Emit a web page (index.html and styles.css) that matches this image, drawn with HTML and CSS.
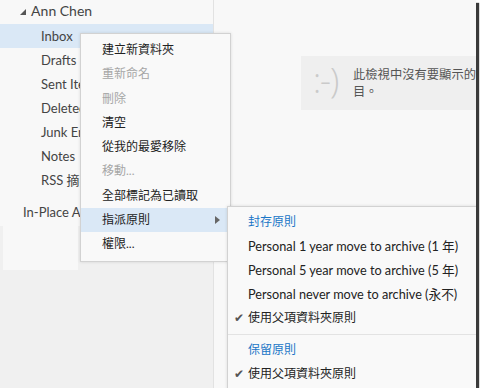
FILE: index.html
```
<!DOCTYPE html>
<html lang="zh-Hant">
<head>
    <meta charset="UTF-8">
    <title>Folder menu</title>
    <link rel="stylesheet" href="styles.css">
</head>
<body>
    <div class="screen">
        <div class="folders">
            <div class="tree">
                <div class="row account">
                    <svg class="twisty" width="6" height="6" viewBox="0 0 6 6"><polygon points="6,0 6,6 0,6" fill="#555"/></svg>
                    Ann Chen
                </div>
                <div class="row folder selected">Inbox</div>
                <div class="row folder">Drafts</div>
                <div class="row folder">Sent Items</div>
                <div class="row folder">Deleted Items</div>
                <div class="row folder">Junk Email</div>
                <div class="row folder">Notes</div>
                <div class="row folder">RSS 摘要</div>
                <div class="row archive">In-Place Archive</div>
            </div>
            <div class="rest">
                <div class="tip"></div>
            </div>
        </div>
        <div class="main">
            <div class="empty">
                <span class="smiley">:-)</span>
                <p class="msg">此檢視中沒有要顯示的項目。</p>
            </div>
        </div>

        <ul class="menu">
            <li>建立新資料夾</li>
            <li class="off">重新命名</li>
            <li class="off">刪除</li>
            <li>清空</li>
            <li>從我的最愛移除</li>
            <li class="off">移動...</li>
            <li>全部標記為已讀取</li>
            <li class="open">指派原則<span class="arrow"></span></li>
            <li>權限...</li>
        </ul>

        <ul class="submenu">
            <li class="head">封存原則</li>
            <li class="en">Personal 1 year move to archive (1 年)</li>
            <li class="en">Personal 5 year move to archive (5 年)</li>
            <li class="en">Personal never move to archive (永不)</li>
            <li><span class="check">✔</span>使用父項資料夾原則</li>
            <li class="sep"></li>
            <li class="head">保留原則</li>
            <li><span class="check">✔</span>使用父項資料夾原則</li>
        </ul>
    </div>
</body>
</html>
```

FILE: styles.css
```
body {
    margin: 0;
    background: #fff;
    font-family: Lato, "Noto Sans CJK TC", sans-serif;
    font-size: 13px;
    color: #444;
}

.screen {
    position: relative;
    width: 476px;
    height: 388px;
    overflow: hidden;
    display: flex;
    background: #f8f8f8;
    box-shadow: 3px 3px 1px #3a3a3a;
}

.folders {
    flex-shrink: 0;
    width: 213px;
    border-right: 1px solid #e2e2e2;
    display: flex;
    flex-direction: column;
}

.tree {
    background: #f8f8f8;
    padding-bottom: 2px;
}

.row {
    height: 24px;
    line-height: 24px;
    white-space: nowrap;
    overflow: hidden;
}

.account {
    padding-left: 20px;
    line-height: 22px;
    font-size: 14px;
}

.twisty {
    margin-right: 2px;
    vertical-align: 1px;
}

.folder {
    padding-left: 41px;
}

.selected {
    background: #dae8f6;
}

.archive {
    padding-left: 23px;
    margin-top: 8px;
}

.rest {
    flex: 1;
    background: #f0f0f0;
    padding-left: 3px;
}

.tip {
    width: 75px;
    height: 44px;
    background: #f8f8f8;
}

.main {
    flex: 1;
    min-width: 0;
    padding: 56px 0 0 87px;
}

.empty {
    display: flex;
    width: 260px;
    height: 54px;
    box-sizing: border-box;
    padding: 10px 0 0 12px;
    background: #efefef;
}

.smiley {
    flex-shrink: 0;
    width: 40px;
    margin-top: -6px;
    font-family: "Open Sans", sans-serif;
    font-weight: 300;
    font-size: 34px;
    line-height: 40px;
    color: #cacaca;
    letter-spacing: -1px;
}

.msg {
    flex-shrink: 0;
    margin: 0;
    width: 136px;
    font-size: 12.3px;
    line-height: 17px;
    color: #555;
}

.menu,
.submenu {
    position: absolute;
    margin: 0;
    list-style: none;
    background: #f9f9f9;
    border: 1px solid #d2d2d2;
    box-shadow: 0 0 3px rgba(0, 0, 0, 0.12);
    color: #222;
    font-size: 12px;
}

.menu {
    left: 80px;
    top: 33px;
    width: 149px;
    padding: 4px 0;
}

.menu li {
    position: relative;
    height: 24.3px;
    line-height: 24px;
    padding-left: 21px;
}

.menu .off {
    color: #a6a6a6;
}

.menu .open {
    background: #dae8f6;
}

.arrow {
    position: absolute;
    right: 10px;
    top: 8px;
    border-left: 5px solid #666;
    border-top: 4px solid transparent;
    border-bottom: 4px solid transparent;
}

.submenu {
    left: 227px;
    top: 206px;
    width: 260px;
    height: 200px;
    padding: 3px 0 0;
}

.submenu li {
    height: 24px;
    line-height: 24px;
    padding-left: 20px;
    white-space: nowrap;
}

.submenu .en {
    font-size: 12.7px;
}

.submenu .head {
    color: #1a76c7;
}

.submenu .sep {
    height: 0;
    margin: 4px 0 3px;
    padding: 0;
    border-top: 1px solid #e3e3e3;
}

.check {
    display: inline-block;
    width: 14px;
    margin-left: -14px;
    font-size: 12px;
    color: #555;
}
```
